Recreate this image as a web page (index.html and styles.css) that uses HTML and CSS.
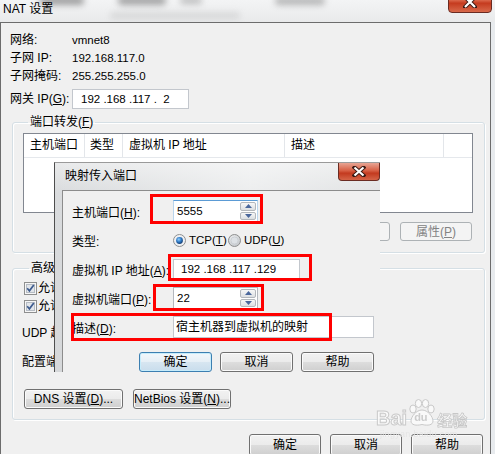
FILE: index.html
```html
<!DOCTYPE html>
<html lang="zh-CN">
<head>
<meta charset="utf-8">
<title>NAT 设置</title>
<link rel="stylesheet" href="styles.css">
</head>
<body>
<div class="screen">
  <div class="titlebar">
    <span class="title">NAT 设置</span>
    <span class="blur b1"></span>
    <span class="blur b2"></span>
    <span class="blur b3"></span>
    <span class="blur b4"></span>
    <span class="blur b5"></span>
    <span class="close">
      <svg width="14" height="12" viewBox="0 0 14 12"><path d="M2 1 L12 11 M12 1 L2 11" stroke="#3a1a14" stroke-width="4" stroke-linecap="square"/><path d="M2 1 L12 11 M12 1 L2 11" stroke="#fff" stroke-width="2.2"/></svg>
    </span>
  </div>

  <div class="client">
    <div class="info">
      <div class="irow"><span class="ilbl">网络:</span><span class="val">vmnet8</span></div>
      <div class="irow"><span class="ilbl">子网 IP:</span><span class="val">192.168.117.0</span></div>
      <div class="irow"><span class="ilbl">子网掩码:</span><span class="val">255.255.255.0</span></div>
      <div class="irow gw"><span class="ilbl">网关 IP(<u>G</u>):</span><span class="ipbox">192 .168 .117 .  2</span></div>
    </div>

    <fieldset class="group pf">
      <legend>端口转发(<u>F</u>)</legend>
      <div class="listview">
        <div class="lv-head">
          <span class="col c1">主机端口</span>
          <span class="col c2">类型</span>
          <span class="col c3">虚拟机 IP 地址</span>
          <span class="col c4">描述</span>
          <span class="col c5"></span>
        </div>
      </div>
      <div class="btnrow">
        <span class="btn disabled">移除(<u>R</u>)</span>
        <span class="btn disabled">属性(<u>P</u>)</span>
      </div>
    </fieldset>

    <fieldset class="group adv">
      <legend>高级</legend>
      <div class="chk">
        <svg width="13" height="13" viewBox="0 0 13 13"><rect x=".5" y=".5" width="12" height="12" fill="#f6f6f6" stroke="#8e8f8f"/><rect x="2.5" y="2.5" width="8" height="8" fill="#e1e5ea" stroke="#b6bcc4"/><path d="M3.2 6.3 L5.4 8.8 L9.8 3" fill="none" stroke="#3d5b8e" stroke-width="1.7"/></svg>
        <span>允许</span>
      </div>
      <div class="chk">
        <svg width="13" height="13" viewBox="0 0 13 13"><rect x=".5" y=".5" width="12" height="12" fill="#f6f6f6" stroke="#8e8f8f"/><rect x="2.5" y="2.5" width="8" height="8" fill="#e1e5ea" stroke="#b6bcc4"/><path d="M3.2 6.3 L5.4 8.8 L9.8 3" fill="none" stroke="#3d5b8e" stroke-width="1.7"/></svg>
        <span>允许</span>
      </div>
      <div class="arow udp">UDP 超</div>
      <div class="arow cfg">配置端</div>
      <div class="dnsrow">
        <span class="btn dns">DNS 设置(<u>D</u>)...</span>
        <span class="btn nb">NetBios 设置(<u>N</u>)...</span>
      </div>
    </fieldset>

    <div class="footer">
      <span class="btn big">确定</span>
      <span class="btn big">取消</span>
      <span class="btn big">帮助</span>
    </div>
  </div>

  <div class="dialog">
    <div class="dlg-title">
      <span>映射传入端口</span>
      <span class="dlg-close">
        <svg width="14" height="11" viewBox="0 0 14 11"><path d="M2.5 1.5 L11.5 9.5 M11.5 1.5 L2.5 9.5" stroke="#3a1a14" stroke-width="4" stroke-linecap="square"/><path d="M2.5 1.5 L11.5 9.5 M11.5 1.5 L2.5 9.5" stroke="#fff" stroke-width="2.2"/></svg>
      </span>
    </div>
    <div class="dlg-body">
      <div class="drow">
        <span class="dlbl">主机端口(<u>H</u>):</span>
        <span class="spin focus">
          <span class="sval">5555</span>
          <span class="sbtns">
            <span class="sb"><svg width="7" height="4" viewBox="0 0 7 4"><path d="M0 4 L3.5 0 L7 4Z" fill="#4a679c"/></svg></span>
            <span class="sb"><svg width="7" height="4" viewBox="0 0 7 4"><path d="M0 0 L3.5 4 L7 0Z" fill="#4a679c"/></svg></span>
          </span>
        </span>
      </div>
      <div class="drow">
        <span class="dlbl">类型:</span>
        <span class="radio r1">
          <svg width="13" height="13" viewBox="0 0 13 13"><defs><radialGradient id="rg" cx="40%" cy="35%" r="65%"><stop offset="0" stop-color="#8fd0ff"/><stop offset=".6" stop-color="#2a74c0"/><stop offset="1" stop-color="#173f73"/></radialGradient></defs><circle cx="6.5" cy="6.5" r="6" fill="#eef0f3" stroke="#8e8f8f"/><circle cx="6.5" cy="6.5" r="3.4" fill="url(#rg)"/></svg>
          <span>TCP(<u>T</u>)</span>
        </span>
        <span class="radio">
          <svg width="13" height="13" viewBox="0 0 13 13"><defs><radialGradient id="rg2" cx="40%" cy="35%" r="65%"><stop offset="0" stop-color="#f4f4f4"/><stop offset="1" stop-color="#c4c8cc"/></radialGradient></defs><circle cx="6.5" cy="6.5" r="6" fill="url(#rg2)" stroke="#8e8f8f"/><circle cx="6.5" cy="6.5" r="3.6" fill="#dde1e5" stroke="#c4c9ce" stroke-width=".8"/></svg>
          <span>UDP(<u>U</u>)</span>
        </span>
      </div>
      <div class="drow">
        <span class="dlbl">虚拟机 IP 地址(<u>A</u>):</span>
        <span class="tbox ip">192 .168 .117 .129</span>
      </div>
      <div class="drow">
        <span class="dlbl">虚拟机端口(<u>P</u>):</span>
        <span class="spin">
          <span class="sval">22</span>
          <span class="sbtns">
            <span class="sb"><svg width="7" height="4" viewBox="0 0 7 4"><path d="M0 4 L3.5 0 L7 4Z" fill="#4a679c"/></svg></span>
            <span class="sb"><svg width="7" height="4" viewBox="0 0 7 4"><path d="M0 0 L3.5 4 L7 0Z" fill="#4a679c"/></svg></span>
          </span>
        </span>
      </div>
      <div class="drow">
        <span class="dlbl">描述(<u>D</u>):</span>
        <span class="tbox desc">宿主机器到虚拟机的映射</span>
      </div>
      <div class="dbtns">
        <span class="btn def">确定</span>
        <span class="btn">取消</span>
        <span class="btn">帮助</span>
      </div>
    </div>
  </div>

  <div class="mark m1"></div>
  <div class="mark m2"></div>
  <div class="mark m3"></div>
  <div class="mark m4"></div>

  <div class="watermark">
    <div class="wm-top">
      <span class="wm-bai">Bai</span>
      <span class="wm-paw">
        <svg width="30" height="28" viewBox="0 0 30 28"><g fill="#fafafa" stroke="#c4c4c4" stroke-width="1"><ellipse cx="6" cy="10" rx="3.2" ry="4"/><ellipse cx="11.5" cy="4.5" rx="3.2" ry="4"/><ellipse cx="18.5" cy="4.5" rx="3.2" ry="4"/><ellipse cx="24" cy="10" rx="3.2" ry="4"/><path d="M15 11 C9 11 4 18 4 22 C4 26 9 27 15 25.5 C21 27 26 26 26 22 C26 18 21 11 15 11Z"/></g></svg>
        <span class="wm-du">du</span>
      </span>
      <span class="wm-jy">经验</span>
    </div>
    <div class="wm-url">jingyan.baidu.com</div>
  </div>
</div>
</body>
</html>
```

FILE: styles.css
```css
* { box-sizing: border-box; }
html, body { margin: 0; padding: 0; }
body {
  width: 495px;
  height: 454px;
  overflow: hidden;
  background: #e8ebee;
  font-family: "Liberation Sans", "Noto Sans CJK SC", sans-serif;
  font-size: 12px;
  color: #000;
}
u { text-decoration: underline; text-underline-offset: 1px; }

.screen { position: relative; width: 495px; height: 454px; overflow: hidden; }

/* ---------- main title bar ---------- */
.titlebar {
  position: relative;
  height: 22px;
  display: flex;
  align-items: flex-start;
  background: linear-gradient(#f3f4f5, #e9eaeb);
  overflow: hidden;
}
.title {
  position: relative;
  z-index: 1;
  padding: 2px 0 0 3px;
  font-size: 12px;
  line-height: 15px;
}
.blur {
  position: absolute;
  border-radius: 4px;
  filter: blur(3px);
}
.b1 { left: 40px; top: -4px; width: 44px; height: 9px; background: rgba(60,60,60,.45); }
.b2 { left: 118px; top: -4px; width: 48px; height: 9px; background: rgba(70,70,70,.45); }
.b3 { left: 180px; top: -3px; width: 22px; height: 7px; background: rgba(70,70,70,.3); }
.b4 { left: 275px; top: -3px; width: 50px; height: 8px; background: rgba(70,70,70,.35); }
.b5 { left: 110px; top: 12px; width: 130px; height: 7px; background: rgba(120,120,120,.18); }
.close {
  position: relative;
  z-index: 1;
  margin: -11px 3px 0 auto;
  width: 44px;
  height: 24px;
  border: 1px solid #6a2b22;
  border-radius: 0 0 4px 4px;
  background: linear-gradient(#e9a08c 0%, #dc6a4e 45%, #c53b1f 60%, #d8694b 100%);
  display: flex;
  align-items: center;
  justify-content: center;
  padding-top: 1px;
}

/* ---------- client area ---------- */
.client {
  height: 432px;
  margin-right: 4px;
  border: 1px solid #6c6c6c;
  border-bottom: 0;
  background: #f0f0f0;
  padding: 8px 5px 0 9px;
}
.irow { display: flex; align-items: center; height: 18px; line-height: 18px; }
.ilbl { width: 62px; flex: none; }
.val { font-size: 11.5px; }
.gw { height: 22px; margin-top: 3px; }
.ipbox {
  width: 117px;
  height: 20px;
  border: 1px solid #c3c7cd;
  background: #fff;
  line-height: 18px;
  padding-left: 8px;
  white-space: pre;
  font-size: 11.5px;
}

/* groupboxes */
.group {
  margin: 4px 0 0 2px;
  border: 1px solid #d5dfe5;
  border-radius: 3px;
  min-width: 0;
  box-shadow: inset 1px 1px 0 #fff, 1px 1px 0 #fff;
}
.group legend {
  margin-left: 5px;
  padding: 0 2px;
  line-height: 16px;
}
.pf { padding: 3px 11px 11px 10px; }

.listview {
  height: 80px;
  border: 1px solid #828790;
  background: #fff;
}
.lv-head {
  display: flex;
  height: 24px;
  border-bottom: 1px solid #e5e8ec;
}
.col {
  height: 23px;
  line-height: 23px;
  border-right: 1px solid #e3e6ea;
  padding-left: 6px;
  flex: none;
}
.c1 { width: 61px; }
.c2 { width: 38px; padding-left: 5px; }
.c3 { width: 162px; }
.c4 { width: 159px; }
.c5 { flex: 1; border-right: 0; }

.btnrow {
  display: flex;
  justify-content: flex-end;
  gap: 10px;
  margin-top: 9px;
  padding-right: 1px;
}

.btn {
  width: 72px;
  height: 19px;
  border: 1px solid #707070;
  border-radius: 3px;
  background: linear-gradient(#f2f2f2 0%, #ebebeb 49%, #dddddd 50%, #cfcfcf 100%);
  box-shadow: inset 0 0 0 1px #fbfbfb;
  display: flex;
  align-items: center;
  justify-content: center;
  line-height: 1;
  white-space: nowrap;
}
.btn.disabled {
  border-color: #adb2b5;
  background: #f4f4f4;
  color: #838383;
  box-shadow: none;
}

.adv { margin-top: 7px; padding: 3px 11px 10px 11px; }
.chk { display: flex; align-items: center; gap: 1px; height: 18px; line-height: 18px; white-space: nowrap; }
.arow { height: 18px; line-height: 18px; margin-left: -2px; white-space: nowrap; }
.udp { margin-top: 9px; }
.cfg { margin-top: 11px; }
.dnsrow { display: flex; gap: 10px; margin-top: 18px; }
.dns { width: 99px; height: 20px; }
.nb { width: 98px; height: 20px; }

.footer {
  display: flex;
  justify-content: flex-end;
  gap: 9px;
  margin-top: 14px;
  padding-right: 2px;
}
.btn.big { width: 72px; height: 22px; }

/* ---------- overlay dialog ---------- */
.dialog {
  position: absolute;
  left: 54px;
  top: 162px;
  width: 326px;
  height: 210px;
  border-left: 1px solid #4d4d4d;
  border-top: 1px solid #9a9a9a;
  background: linear-gradient(#e9eaeb, #d9dbdd 30px, #d6d8da);
  display: flex;
  flex-direction: column;
}
.dlg-title {
  position: relative;
  height: 27px;
  line-height: 27px;
  padding-left: 10px;
  flex: none;
  background: linear-gradient(90deg, rgba(255,255,255,0) 0, rgba(255,255,255,.5) 60%, rgba(255,255,255,.2) 100%);
}
.dlg-close {
  position: absolute;
  right: 0;
  top: 0;
  width: 42px;
  height: 18px;
  border: 1px solid #6a2b22;
  border-top: 0;
  border-radius: 0 0 4px 4px;
  background: linear-gradient(#e8a594 0%, #d75f44 45%, #c33a1f 60%, #d56447 100%);
  display: flex;
  align-items: center;
  justify-content: center;
}
.dlg-body {
  flex: 1;
  margin-left: 7px;
  border-left: 1px solid #8c8c8c;
  border-top: 1px solid #8c8c8c;
  background: #f0f0f0;
  padding: 9px 6px 0 9px;
}
.drow {
  display: flex;
  align-items: center;
  height: 22px;
  margin-bottom: 7px;
  white-space: nowrap;
}
.dlbl { width: 101px; flex: none; }

.spin {
  display: flex;
  width: 85px;
  height: 22px;
  border: 1px solid #b4b8be;
  background: #fff;
}
.spin.focus { border-color: #5b9bd5 #b9d4ec #c5dcef #b9d4ec; }
.sval { flex: 1; padding-left: 3px; line-height: 20px; font-size: 11.5px; }
.sbtns {
  width: 17px;
  display: flex;
  flex-direction: column;
  gap: 1px;
  padding: 1px 1px 1px 0;
}
.sb {
  flex: 1;
  border: 1px solid #b3b7bc;
  border-radius: 2px;
  background: linear-gradient(#f7f7f7, #dcdfe2);
  display: flex;
  align-items: center;
  justify-content: center;
}

.radio { display: flex; align-items: center; gap: 3px; font-size: 11.5px; }
.r1 { width: 55px; }

.tbox {
  height: 21px;
  border: 1px solid #c3c7cd;
  background: #fff;
  line-height: 19px;
  white-space: pre;
}
.tbox.ip { width: 127px; padding-left: 7px; font-size: 11.5px; }
.tbox.desc { width: 201px; padding-left: 2px; height: 22px; line-height: 20px; }

.dbtns {
  display: flex;
  justify-content: flex-end;
  gap: 8px;
  margin-top: 14px;
}
.dbtns .btn { width: 73px; height: 20px; }
.btn.def {
  border-color: #3c7fb1;
  background: linear-gradient(#f2f7fb 0%, #e6eff6 49%, #d7e6f1 50%, #c9ddec 100%);
  box-shadow: inset 0 0 0 1px #c6ecfb;
}

/* ---------- red annotation boxes ---------- */
.mark { position: absolute; border: 3px solid #f00; }
.m1 { left: 150px; top: 194px; width: 113px; height: 30px; }
.m2 { left: 168px; top: 254px; width: 144px; height: 27px; }
.m3 { left: 153px; top: 284px; width: 111px; height: 27px; }
.m4 { left: 71px; top: 313px; width: 261px; height: 28px; }

/* ---------- watermark ---------- */
.watermark {
  position: absolute;
  left: 376px;
  top: 397px;
  width: 92px;
  opacity: .9;
}
.wm-top { display: flex; align-items: flex-end; height: 31px; }
.wm-bai {
  font-family: "Liberation Sans", sans-serif;
  font-weight: bold;
  font-size: 20px;
  line-height: 20px;
  color: #fafafa;
  -webkit-text-stroke: 1px #c6c6c6;
}
.wm-paw { position: relative; width: 30px; height: 28px; flex: none; margin-bottom: 1px; }
.wm-paw svg { display: block; }
.wm-du {
  position: absolute;
  left: 7px;
  top: 13px;
  font-family: "Liberation Sans", sans-serif;
  font-weight: bold;
  font-size: 11px;
  line-height: 11px;
  color: #c9c9c9;
}
.wm-jy {
  font-family: "Noto Sans CJK SC", sans-serif;
  font-weight: bold;
  font-size: 15px;
  line-height: 17px;
  color: #fafafa;
  -webkit-text-stroke: .8px #c3c3c3;
}
.wm-url {
  margin-top: 2px;
  padding-left: 4px;
  font-size: 9px;
  line-height: 9px;
  color: #e4e4e4;
  letter-spacing: .3px;
}
```
